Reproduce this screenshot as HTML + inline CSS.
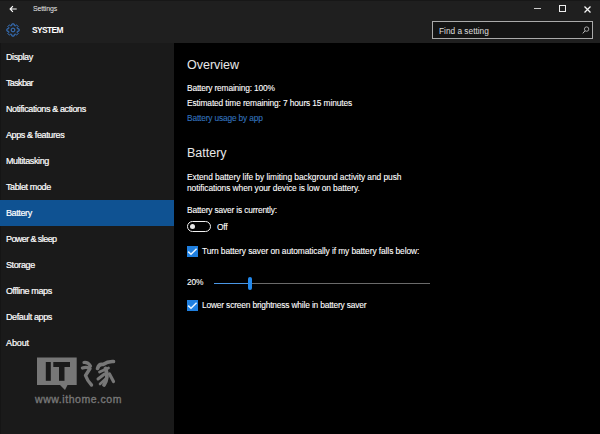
<!DOCTYPE html>
<html><head><meta charset="utf-8">
<style>
*{margin:0;padding:0;box-sizing:border-box}
html,body{width:600px;height:434px;overflow:hidden;background:#000}
body{position:relative;font-family:"Liberation Sans",sans-serif;color:#fff;font-size:9px}
.abs{position:absolute;white-space:nowrap;line-height:1}
#top{position:absolute;left:0;top:0;width:600px;height:43px;background:#1f1f1f}
#side{position:absolute;left:0;top:43px;width:174px;height:391px;background:#1a1a1a}
#content{position:absolute;left:174px;top:43px;width:426px;height:391px;background:#000}
.item{position:absolute;left:6px;font-size:9px;letter-spacing:-0.38px;color:#fff;-webkit-text-stroke:0.2px #fff;line-height:1;white-space:nowrap}
.sel{position:absolute;left:0;top:199.5px;width:174px;height:26.3px;background:#0f5292}
.txt{position:absolute;left:187px;font-size:8.4px;letter-spacing:-0.17px;color:#fff;-webkit-text-stroke:0.1px currentColor;white-space:nowrap;line-height:1}
.h{position:absolute;left:187px;font-size:12.5px;color:#e8e8e8;white-space:nowrap;line-height:1}
.cb{position:absolute;left:187px;width:11px;height:11px;background:#1f7fdf}
</style></head><body>
<div id="top"></div><div class="abs" style="left:0;top:0;width:600px;height:1px;background:#171717"></div>
<div id="side"></div>
<div id="content"></div>
<div class="abs" style="left:0;top:43px;width:1px;height:391px;background:#151515"></div>
<div class="sel"></div>

<!-- title bar -->
<svg class="abs" style="left:9px;top:4.5px" width="9" height="8" viewBox="0 0 9 8"><path d="M3.9 1.1 L1.1 4 L3.9 6.9 M1.2 4 H7.7" fill="none" stroke="#fff" stroke-width="1.15"/></svg>
<div class="abs" style="left:33px;top:5px;font-size:7px;letter-spacing:-0.15px;color:#e8e8e8">Settings</div>
<div class="abs" style="left:534px;top:8px;width:6.5px;height:1.2px;background:#ccc"></div>
<div class="abs" style="left:559px;top:5px;width:7.2px;height:7.2px;border:1.6px solid #eee"></div>
<svg class="abs" style="left:584px;top:6px" width="7" height="7" viewBox="0 0 7 7"><path d="M0.5 0.5 L6.5 6.5 M6.5 0.5 L0.5 6.5" stroke="#f4f4f4" stroke-width="1.3"/></svg>

<!-- header -->
<svg class="abs" style="left:6px;top:23.2px" width="14" height="14" viewBox="0 0 14 14"><path d="M11.16 5.28 L11.32 5.74 L13.09 5.84 L13.09 8.16 L11.32 8.26 L11.16 8.72 L10.94 9.17 L12.13 10.48 L10.48 12.13 L9.17 10.94 L8.72 11.16 L8.26 11.32 L8.16 13.09 L5.84 13.09 L5.74 11.32 L5.28 11.16 L4.83 10.94 L3.52 12.13 L1.87 10.48 L3.06 9.17 L2.84 8.72 L2.68 8.26 L0.91 8.16 L0.91 5.84 L2.68 5.74 L2.84 5.28 L3.06 4.83 L1.87 3.52 L3.52 1.87 L4.83 3.06 L5.28 2.84 L5.74 2.68 L5.84 0.91 L8.16 0.91 L8.26 2.68 L8.72 2.84 L9.17 3.06 L10.48 1.87 L12.13 3.52 L10.94 4.83 Z" fill="none" stroke="#3a7acb" stroke-width="1" stroke-linejoin="round"/><circle cx="7" cy="7" r="1.9" fill="none" stroke="#3a7acb" stroke-width="1"/></svg>
<div class="abs" style="left:32px;top:25.8px;font-size:8.4px;letter-spacing:-0.6px;font-weight:bold">SYSTEM</div>

<!-- search -->
<div class="abs" style="left:432px;top:21px;width:161px;height:18px;border:1.5px solid #aaa;background:#141414"></div>
<div class="abs" style="left:439px;top:26.5px;font-size:8.3px;color:#ddd">Find a setting</div>
<svg class="abs" style="left:581px;top:25px" width="10" height="10" viewBox="0 0 10 10"><circle cx="5.6" cy="4.1" r="2.2" fill="none" stroke="#bbb" stroke-width="0.85"/><path d="M4 5.8 L1.8 8.4" stroke="#bbb" stroke-width="1"/></svg>

<!-- sidebar -->
<div class="item" style="top:53px">Display</div>
<div class="item" style="top:79px;letter-spacing:-0.65px">Taskbar</div>
<div class="item" style="top:105px">Notifications &amp; actions</div>
<div class="item" style="top:131px">Apps &amp; features</div>
<div class="item" style="top:157px">Multitasking</div>
<div class="item" style="top:183px">Tablet mode</div>
<div class="item" style="top:209px">Battery</div>
<div class="item" style="top:235px;letter-spacing:-0.58px">Power &amp; sleep</div>
<div class="item" style="top:261px">Storage</div>
<div class="item" style="top:287px">Offline maps</div>
<div class="item" style="top:313px">Default apps</div>
<div class="item" style="top:339px;letter-spacing:-0.1px">About</div>

<!-- content -->
<div class="h" style="top:59px">Overview</div>
<div class="txt" style="top:84px">Battery remaining: 100%</div>
<div class="txt" style="top:99px;letter-spacing:-0.12px">Estimated time remaining: 7 hours 15 minutes</div>
<div class="txt" style="top:114px;color:#3372bd">Battery usage by app</div>
<div class="h" style="top:147px">Battery</div>
<div class="txt" style="top:173px;letter-spacing:-0.05px">Extend battery life by limiting background activity and push</div>
<div class="txt" style="top:183.5px;letter-spacing:-0.07px">notifications when your device is low on battery.</div>
<div class="txt" style="top:206.2px">Battery saver is currently:</div>

<div class="abs" style="left:187px;top:221px;width:24px;height:10.8px;border:1.5px solid #f0f0f0;border-radius:6px"></div>
<div class="abs" style="left:189.8px;top:224px;width:5px;height:5px;border-radius:50%;background:#e6e6e6"></div>
<div class="txt" style="left:217px;top:223px">Off</div>

<div class="cb" style="top:246px"></div>
<svg class="abs" style="left:187px;top:246px" width="11" height="11" viewBox="0 0 11 11"><path d="M1.2 5.6 L4 8.2 L9.6 2.8" fill="none" stroke="#e8f4ff" stroke-width="1.5"/></svg>
<div class="txt" style="left:202px;top:247px;letter-spacing:-0.08px">Turn battery saver on automatically if my battery falls below:</div>

<div class="txt" style="top:278.2px">20%</div>
<div class="abs" style="left:214px;top:283px;width:35px;height:1px;background:#4a97e6"></div>
<div class="abs" style="left:249px;top:283px;width:181px;height:1px;background:#6a6a6a"></div>
<div class="abs" style="left:247.5px;top:277px;width:4.5px;height:12.5px;border-radius:2.3px;background:#2389ec"></div>

<div class="cb" style="top:300px"></div>
<svg class="abs" style="left:187px;top:300px" width="11" height="11" viewBox="0 0 11 11"><path d="M1.2 5.6 L4 8.2 L9.6 2.8" fill="none" stroke="#e8f4ff" stroke-width="1.5"/></svg>
<div class="txt" style="left:202px;top:301px">Lower screen brightness while in battery saver</div>

<!-- watermark -->
<svg class="abs" style="left:30px;top:350px" width="100" height="45" viewBox="30 350 100 45">
  <path d="M37 357.5 H76.7 V385 H67.5 L65 390 L60 385 H37 Z" fill="#777"/>
  <rect x="45.8" y="362" width="5" height="18.8" fill="#1a1a1a"/>
  <rect x="53.3" y="362" width="16.7" height="5" fill="#1a1a1a"/>
  <rect x="59" y="362" width="5.5" height="18.8" fill="#1a1a1a"/>
  <g fill="none" stroke="#777" stroke-linecap="round" stroke-linejoin="round">
    <path d="M84 362.5 Q88 362 90.5 366" stroke-width="3.2"/>
    <path d="M82.5 368 Q86.5 366.5 90 368.5 L85.5 375.5 Q87.5 381 91.5 385" stroke-width="3.4"/>
    <path d="M97.5 368.5 Q99 363.5 103 364.5 Q108 361 113.5 361.5" stroke-width="3.6"/>
    <path d="M99.5 372 L108.5 368" stroke-width="2.8"/>
    <path d="M105.5 368.5 Q109 377 104 385" stroke-width="3.8"/>
    <path d="M98 379 L104.5 374" stroke-width="3"/>
    <path d="M100 384 L105.5 379" stroke-width="2.6"/>
    <path d="M109.5 374 L113.5 381.5" stroke-width="3.2"/>
  </g>
</svg>
<div class="abs" style="left:35px;top:394px;font-size:10.5px;letter-spacing:0.55px;-webkit-text-stroke:0.35px #777;color:#777">www.ithome.com</div>
</body></html>
